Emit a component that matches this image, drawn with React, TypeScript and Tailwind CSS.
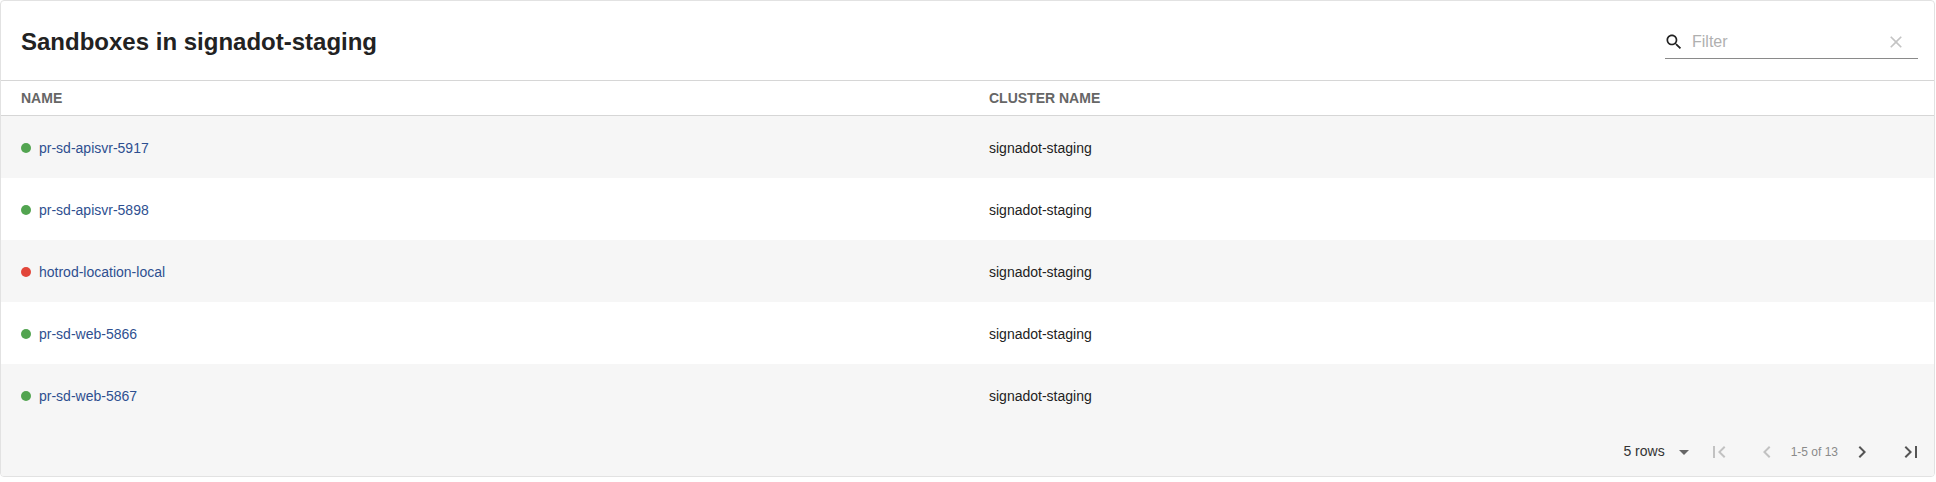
const ROWS = [
  { name: 'pr-sd-apisvr-5917', cluster: 'signadot-staging', ok: true },
  { name: 'pr-sd-apisvr-5898', cluster: 'signadot-staging', ok: true },
  { name: 'hotrod-location-local', cluster: 'signadot-staging', ok: false },
  { name: 'pr-sd-web-5866', cluster: 'signadot-staging', ok: true },
  { name: 'pr-sd-web-5867', cluster: 'signadot-staging', ok: true },
]

function Icon({ d, className }: { d: string; className?: string }) {
  return (
    <svg viewBox="0 0 24 24" className={className} fill="currentColor">
      <path d={d} />
    </svg>
  )
}

const SEARCH =
  'M15.5 14h-.79l-.28-.27C15.41 12.59 16 11.11 16 9.5 16 5.91 13.09 3 9.5 3S3 5.91 3 9.5 5.91 16 9.5 16c1.61 0 3.09-.59 4.23-1.57l.27.28v.79l5 4.99L20.49 19l-4.99-5zm-6 0C7.01 14 5 11.990 5 9.5S7.01 5 9.5 5 14 7.01 14 9.5 11.99 14 9.5 14z'
const CLOSE =
  'M19 6.41L17.59 5 12 10.59 6.41 5 5 6.41 10.59 12 5 17.59 6.41 19 12 13.41 17.59 19 19 17.59 13.41 12z'
const FIRST = 'M18.41 16.59L13.82 12l4.59-4.59L17 6l-6 6 6 6zM6 6h2v12H6z'
const LAST = 'M5.59 7.41L10.18 12l-4.59 4.59L7 18l6-6-6-6zM16 6h2v12h-2z'
const PREV = 'M15.41 7.41L14 6l-6 6 6 6 1.41-1.41L10.83 12z'
const NEXT = 'M10 6L8.59 7.41 13.17 12l-4.58 4.59L10 18l6-6z'
const DROP = 'M7 10l5 5 5-5z'

export default function App() {
  return (
    <div className="w-[1936px] h-[482px] bg-white font-['Liberation_Sans',Arial,sans-serif]">
      <div className="w-[1935px] border border-[#e2e2e2] rounded-[4px] overflow-hidden">
        {/* Title bar */}
        <div className="h-[80px] flex items-center justify-between pl-5 pr-4 border-b border-[#d6d6d6]">
          <h1 className="text-[24px] font-bold text-[#222] leading-none mt-[3px]">Sandboxes in signadot-staging</h1>
          <div className="w-[253px] h-[32px] flex items-center border-b border-[#8a8a8a] mt-[4px]">
            <Icon d={SEARCH} className="w-5 h-5 text-[#222] shrink-0 -ml-[1px]" />
            <span className="ml-[8px] flex-1 text-[16px] text-[#b0b0b0]">Filter</span>
            <Icon d={CLOSE} className="w-5 h-5 text-[#c4c4c4] mr-[12px]" />
          </div>
        </div>

        {/* Column headers */}
        <div className="h-[35px] grid grid-cols-[968px_1fr] items-center px-5 border-b border-[#d6d6d6] text-[14px] font-bold text-[#666] uppercase pt-[1px]">
          <span>Name</span>
          <span>Cluster Name</span>
        </div>

        {ROWS.map((r, i) => (
          <div
            key={r.name}
            className={`h-[62px] grid grid-cols-[968px_1fr] items-center px-5 text-[14px] pt-[2px] ${i % 2 === 0 ? 'bg-[#f6f6f6]' : 'bg-white'}`}
          >
            <div className="flex items-center gap-2">
              <span className={`w-[10px] h-[10px] rounded-full ${r.ok ? 'bg-[#52a450]' : 'bg-[#e2463a]'}`} />
              <a className="text-[#2e4f90]">{r.name}</a>
            </div>
            <span className="text-[#222]">{r.cluster}</span>
          </div>
        ))}

        {/* Pagination */}
        <div className="h-[50px] bg-[#f6f6f6] flex items-center justify-end pr-[11px] pt-[1px]">
          <span className="text-[14px] text-[#333]">5 rows</span>
          <Icon d={DROP} className="w-6 h-6 text-[#666] ml-[7px]" />
          <Icon d={FIRST} className="w-6 h-6 text-[#c2c2c2] ml-[11px]" />
          <Icon d={PREV} className="w-6 h-6 text-[#c2c2c2] ml-[24px]" />
          <span className="text-[12px] text-[#8a8a8a] ml-[12px]">1-5 of 13</span>
          <Icon d={NEXT} className="w-6 h-6 text-[#555] ml-[12px]" />
          <Icon d={LAST} className="w-6 h-6 text-[#555] ml-[25px]" />
        </div>
      </div>
    </div>
  )
}
